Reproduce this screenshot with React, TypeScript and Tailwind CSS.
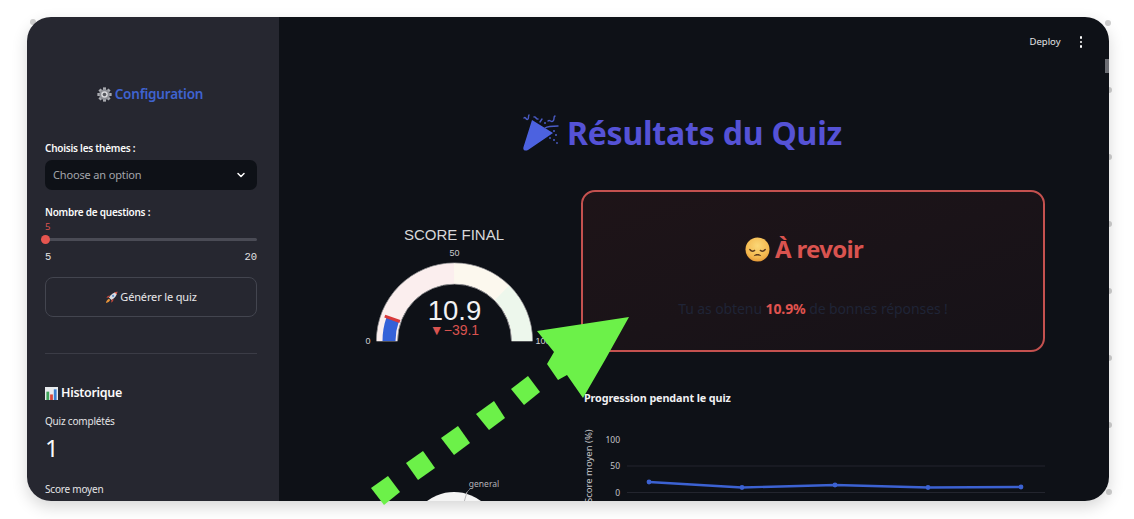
import { ChevronDown } from "lucide-react";

function GearIcon() {
  const teeth = [0, 45, 90, 135, 180, 225, 270, 315];

  return (
    <svg viewBox="0 0 20 20" className="h-[15px] w-[15px] shrink-0">
      {teeth.map((a) => (
        <rect key={a} x="8" y="0.5" width="4" height="4" fill="#a9abb0" transform={`rotate(${a} 10 10)`} />
      ))}
      <circle cx="10" cy="10" r="7" fill="#8b8d93" />
      <circle cx="10" cy="10" r="4.4" fill="#d6d7da" />
      <circle cx="10" cy="10" r="2.4" fill="#55575d" />
    </svg>
  );
}

function RocketIcon() {
  return (
    <svg viewBox="0 0 20 20" className="h-[13px] w-[13px] shrink-0">
      <path d="M6 10 C9 5 13 2 19 1 C18 7 15 11 10 14 Z" fill="#d9dade" />
      <path d="M14.5 2 L19 1 L18 5.5 Z" fill="#d8503f" />
      <path d="M6 10 L2 10.5 L4.5 7.5 L8 7 Z M10 14 L9.5 18 L12.5 15.5 L13 12 Z" fill="#c9483c" />
      <circle cx="12.5" cy="7.5" r="1.6" fill="#5a8fd0" />
      <path d="M6 12 C3.5 13 2 15.5 1.5 18.5 C4.5 18 7 16.5 8 14 Z" fill="#e9953a" />
    </svg>
  );
}

function ChartIcon() {
  return (
    <svg viewBox="0 0 14 14" className="h-[13px] w-[13px] shrink-0">
      <rect x="0" y="0" width="14" height="14" fill="#e8ebee" />
      <rect x="1.5" y="5" width="3" height="9" fill="#3fa35a" />
      <rect x="5.5" y="8" width="3" height="6" fill="#d9483b" />
      <rect x="9.5" y="2.5" width="3" height="11.5" fill="#3b7fd0" />
    </svg>
  );
}

function PartyIcon() {
  return (
    <svg viewBox="0 0 36 38" className="h-[38px] w-[36px] shrink-0">
      <path d="M0.5 33 L9 6 L30 19 L5 36 C2 37.5 -0.5 36 0.5 33 Z" fill="#4c62e0" />
      <g fill="none" stroke="#4a5bc4" strokeWidth="1.4" strokeLinecap="round">
        <path d="M1 4 C3 2 3 7 5 5 C6 4 5 2 6 1" />
        <path d="M11 3 C13 2 13 6 15 5 M17 8 L19 5" />
        <path d="M25 7 C27 5 28 9 30 7 C32 5 30 3 32 2" />
        <path d="M22 14 C25 12 29 12 35 12" />
      </g>
      <g fill="#4a5bc4">
        <circle cx="22" cy="9" r="1" />
        <circle cx="31" cy="17" r="1" />
        <circle cx="33" cy="21" r="1" />
        <circle cx="31" cy="26" r="1" />
        <circle cx="34" cy="29" r="0.9" />
        <circle cx="27" cy="24" r="0.9" />
      </g>
    </svg>
  );
}

function SadFace() {
  return (
    <svg viewBox="0 0 26 26" className="h-[25px] w-[25px] shrink-0">
      <defs>
        <radialGradient id="face" cx="50%" cy="35%" r="70%">
          <stop offset="0%" stopColor="#fbd878" />
          <stop offset="70%" stopColor="#f4b84e" />
          <stop offset="100%" stopColor="#e08f30" />
        </radialGradient>
      </defs>
      <circle cx="13" cy="13" r="12.5" fill="url(#face)" />
      <g fill="none" stroke="#5c3a1e" strokeWidth="1.5" strokeLinecap="round">
        <path d="M5 13 C6.5 15 8.5 15 10 14" />
        <path d="M21 13 C19.5 15 17.5 15 16 14" />
      </g>
      <path d="M9 20 C10.5 17 15.5 17 17 20 C15 19 11 19 9 20 Z" fill="#5c3a1e" />
    </svg>
  );
}

function polar(r: number, value: number) {
  const a = Math.PI * (1 - value / 100);
  return [454.5 + r * Math.cos(a), 341 - r * Math.sin(a)];
}

function band(r0: number, r1: number, from: number, to: number) {
  const [a, b] = polar(r1, from);
  const [c, d] = polar(r1, to);
  const [e, f] = polar(r0, to);
  const [g, h] = polar(r0, from);
  return `M${a} ${b} A${r1} ${r1} 0 0 1 ${c} ${d} L${e} ${f} A${r0} ${r0} 0 0 0 ${g} ${h} Z`;
}

function Gauge() {
  const [x1, y1] = polar(58, 10.9);
  const [x2, y2] = polar(74, 10.9);

  return (
    <svg viewBox="350 190 231 170" className="h-[170px] w-[231px]">
      <text x="454" y="240" textAnchor="middle" fontSize="15" fill="#d8d8da" fontFamily="Liberation Sans">
        SCORE FINAL
      </text>
      <text x="454.5" y="256" textAnchor="middle" fontSize="9" fill="#c9c9cc" fontFamily="Liberation Sans">
        50
      </text>
      {/* base band first so the sections show no seam */}
      <path d={band(57, 78, 0, 100)} fill="#fbf3ee" stroke="#8f8f92" strokeWidth="1" />
      <path d={band(57.5, 77.5, 0, 50)} fill="#fbeeee" />
      <path d={band(57.5, 77.5, 49.8, 75)} fill="#fcf8ee" />
      <path d={band(57.5, 77.5, 74.8, 100)} fill="#edf7ec" />
      <path d={band(59, 72, 0, 10.9)} fill="#3461d8" />
      <line x1={x1} y1={y1} x2={x2} y2={y2} stroke="#d8393a" strokeWidth="3" />
      <text x="454.5" y="320" textAnchor="middle" fontSize="27.5" fill="#f2f2f3" fontFamily="Liberation Sans">
        10.9
      </text>
      <text x="454.5" y="335" textAnchor="middle" fontSize="14" fill="#d9534f" fontFamily="Liberation Sans">
        ▼−39.1
      </text>
      <text x="368" y="344" textAnchor="middle" fontSize="9" fill="#d2d2d4" fontFamily="Liberation Sans">
        0
      </text>
      <text x="543" y="344" textAnchor="middle" fontSize="9" fill="#d2d2d4" fontFamily="Liberation Sans">
        100
      </text>
    </svg>
  );
}

function Pie() {
  return (
    <svg viewBox="350 470 231 31" className="h-[31px] w-[231px]">
      <text x="484" y="487" textAnchor="middle" fontSize="8.5" fill="#b4b4b8" fontFamily="Noto Sans">
        general
      </text>
      <circle cx="454" cy="537" r="45" fill="#f4f4f4" />
      <line x1="454" y1="537" x2="467" y2="492" stroke="#b8b8ba" strokeWidth="1" />
      <line x1="467" y1="492" x2="470" y2="489" stroke="#8f8f92" strokeWidth="0.7" />
    </svg>
  );
}

function ProgressChart() {
  const points = [
    [649, 482],
    [742, 487.5],
    [835, 485],
    [928, 487.5],
    [1021, 487],
  ];

  return (
    <svg viewBox="581 420 464 81" className="h-[81px] w-[464px]">
      <text
        transform="translate(591.5 503) rotate(-90)"
        fontSize="9.5"
        fill="#c4c4c8"
        fontFamily="Noto Sans"
      >
        Score moyen (%)
      </text>
      <g fontSize="8.5" fill="#c4c4c8" fontFamily="Noto Sans" textAnchor="end">
        <text x="620" y="443">100</text>
        <text x="620" y="469">50</text>
        <text x="620" y="495.5">0</text>
      </g>
      <line x1="627" y1="466" x2="1045" y2="466" stroke="#23252e" />
      <line x1="627" y1="492.5" x2="1045" y2="492.5" stroke="#23252e" />
      <polyline points={points.map((p) => p.join(",")).join(" ")} fill="none" stroke="#3c62d2" strokeWidth="2.4" />
      {points.map(([x, y]) => (
        <circle key={x} cx={x} cy={y} r="2.4" fill="#3c62d2" />
      ))}
    </svg>
  );
}

function EdgeDots() {
  const dots = [
    [33, 22],
    [1108, 23],
    [1109, 90],
    [1109, 157],
    [1109, 224],
    [1109, 291],
    [1109, 358],
    [1109, 425],
    [1109, 492],
  ];

  return (
    <svg viewBox="0 0 1134 519" className="pointer-events-none absolute left-0 top-0 h-[519px] w-[1134px]">
      {dots.map(([x, y]) => (
        <circle key={y} cx={x} cy={y} r="3" fill="#cfcfcf" />
      ))}
    </svg>
  );
}

function Arrow() {
  const squares = [
    "528,376 540,392 524,405 511,389",
    "494,401 505,418 489,430 476,414",
    "458,426 470,443 454,455 441,438",
    "423,451 435,468 418,480 406,463",
    "388,476 400,492 384,505 371,488",
  ];

  return (
    <svg viewBox="0 0 1134 519" className="pointer-events-none absolute left-0 top-0 h-[519px] w-[1134px]">
      <polygon
        points="629,317 537,331 554,352 547,364 558,380 567,375 583,398 605,360"
        fill="#6cf149"
      />
      {squares.map((s) => (
        <polygon key={s} points={s} fill="#6cf149" />
      ))}
    </svg>
  );
}

function Sidebar() {
  return (
    <aside className="flex h-full w-[252px] shrink-0 flex-col bg-[#262730] pl-[18px] pr-[22px] pt-[67px] text-[#fafafa]">
      <div className="flex h-[20px] items-center justify-center gap-[3px] pr-[2px]">
        <GearIcon />
        <span className="text-[13.5px] font-semibold tracking-[-0.2px] text-[#3f63cf]">Configuration</span>
      </div>

      <div className="mt-[36px] h-[16px] text-[10px] font-semibold leading-[16px] tracking-[-0.25px]">
        Choisis les thèmes :
      </div>
      <div className="mt-[4px] flex h-[30px] items-center justify-between rounded-[7px] bg-[#0e1117] pl-[8px] pr-[10px]">
        <span className="text-[11px] tracking-[-0.15px] text-[#a3a5ab]">Choose an option</span>
        <ChevronDown className="h-[12px] w-[12px] text-white" strokeWidth={3} />
      </div>

      <div className="mt-[14px] h-[16px] text-[10px] font-semibold leading-[16px] tracking-[-0.25px]">
        Nombre de questions :
      </div>
      <div className="mt-[1px] h-[12px] text-[9.5px] leading-[12px] text-[#d9534f]">5</div>
      <div className="relative mt-[5px] h-[3px] rounded-full bg-[#4a4b55]">
        <div className="absolute -left-[4px] -top-[3px] h-[9px] w-[9px] rounded-full bg-[#e5554f]" />
      </div>
      <div className="mt-[9px] flex h-[14px] justify-between font-['Liberation_Mono'] text-[10.5px] leading-[14px] text-[#e2e2e4]">
        <span>5</span>
        <span>20</span>
      </div>

      <div className="mt-[13px] flex h-[40px] items-center justify-center gap-[2px] rounded-[8px] border border-[#43454f] text-[11px] tracking-[-0.15px] text-[#e8e8ea]">
        <RocketIcon />
        <span>Générer le quiz</span>
      </div>

      <div className="mt-[36px] h-px bg-[#3b3c46]" />

      <div className="mt-[29px] flex h-[20px] items-center gap-[3px]">
        <ChartIcon />
        <span className="text-[12.5px] font-semibold tracking-[-0.3px]">Historique</span>
      </div>
      <div className="mt-[10px] h-[16px] text-[10px] leading-[16px] tracking-[-0.2px] text-[#e4e4e6]">Quiz complétés</div>
      <div className="mt-[3px] h-[32px] text-[24px] leading-[32px]">1</div>
      <div className="mt-[17px] h-[16px] text-[10px] leading-[16px] tracking-[-0.2px] text-[#e4e4e6]">Score moyen</div>
    </aside>
  );
}

export default function App() {
  return (
    <div className="relative h-[519px] w-[1134px] overflow-hidden bg-white pl-[27px] pt-[17px] font-['Noto_Sans',sans-serif]">
      <EdgeDots />

      <div className="relative flex h-[484px] w-[1082px] overflow-hidden rounded-[24px] shadow-[0_6px_16px_rgba(0,0,0,0.16)]">
        <Sidebar />

        <main className="relative flex min-w-0 flex-1 flex-col bg-[#0e1117]">
          <header className="flex h-[50px] shrink-0 items-center justify-end gap-[19px] pr-[27px] text-[9.5px] text-[#e4e4e6]">
            <span>Deploy</span>
            <div className="flex flex-col gap-[2px]">
              <span className="h-[2.5px] w-[2.5px] rounded-full bg-white" />
              <span className="h-[2.5px] w-[2.5px] rounded-full bg-white" />
              <span className="h-[2.5px] w-[2.5px] rounded-full bg-white" />
            </div>
          </header>
          <div className="absolute right-0 top-[42px] h-[14px] w-[4px] bg-[#6c6e74]" />

          <h1 className="mt-[44px] flex h-[44px] shrink-0 items-center justify-center gap-[8px] pr-[23px] text-[32px] font-bold tracking-[-0.2px] text-[#5552d6]">
            <PartyIcon />
            <span>Résultats du Quiz</span>
          </h1>

          <div className="mt-[35px] flex pl-[71px]">
            <div className="w-[231px] shrink-0">
              <Gauge />
              <div className="mt-[110px]">
                <Pie />
              </div>
            </div>

            <div className="w-[464px] shrink-0">
              <section className="flex h-[162px] flex-col items-center rounded-[14px] border-2 border-[#c4514f] bg-linear-to-br from-[#1e1418] to-[#161218] pt-[40px]">
                <div className="flex h-[34px] items-center gap-[5px] pr-[18px]">
                  <SadFace />
                  <span className="text-[24px] font-bold tracking-[-0.7px] text-[#d9534f]">À revoir</span>
                </div>
                <p className="mt-[32px] text-[14px] tracking-[-0.1px] text-[#1f2436]">
                  Tu as obtenu <strong className="text-[#e0534f]">10.9%</strong> de bonnes réponses !
                </p>
              </section>
              <div className="ml-[3px] mt-[38px] h-[16px] text-[10.8px] font-bold leading-[16px] tracking-[-0.1px] text-[#f0f0f2]">
                Progression pendant le quiz
              </div>
              <div className="mt-[14px]">
                <ProgressChart />
              </div>
            </div>
          </div>
        </main>
      </div>

      <Arrow />
    </div>
  );
}
